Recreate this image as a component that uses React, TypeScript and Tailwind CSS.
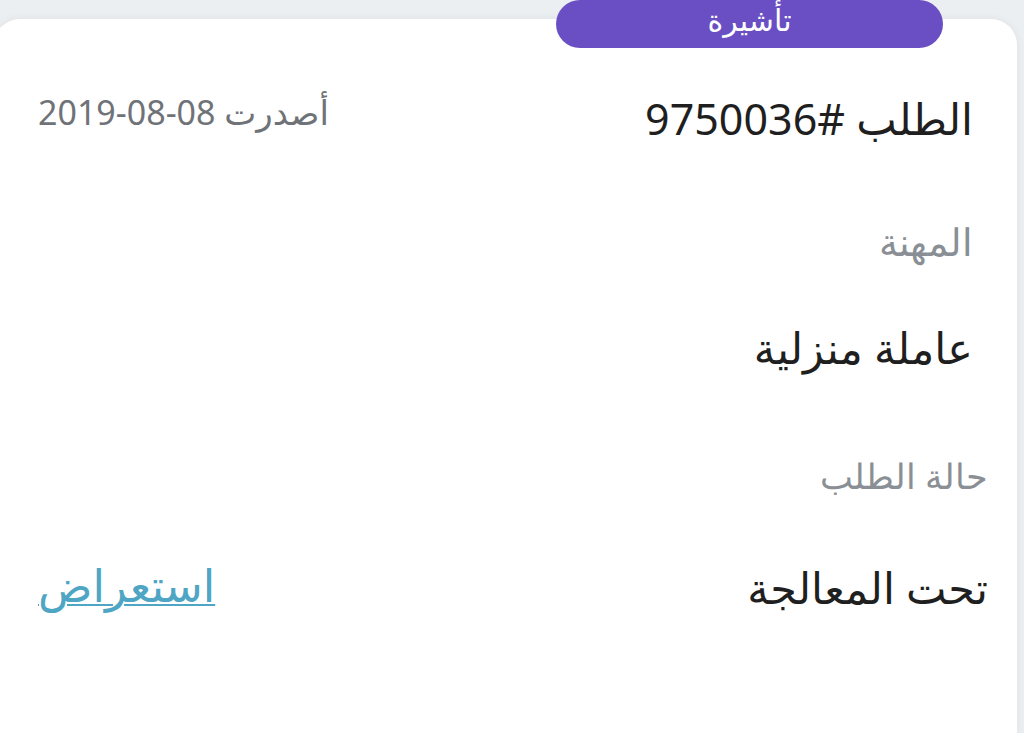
import React from 'react';

export default function App() {
  const font = { fontFamily: '"Noto Sans", "DejaVu Sans", sans-serif' };
  return (
    <div dir="rtl" className="h-[733px] w-[1024px] overflow-hidden bg-[#eceff2]" style={font}>
      <div className="relative mr-[7px] ml-[-6px] mt-[19px] h-[760px] rounded-t-[26px] bg-white shadow-[0_0_10px_rgba(0,0,0,0.06)]">
        {/* badge */}
        <div className="absolute right-[74px] top-[-19px] flex h-[48px] w-[387px] items-center justify-center rounded-full bg-[#6a4fc4] pb-[9px] text-[30px] leading-[40px] text-white">
          تأشيرة
        </div>

        <div className="pr-[44px] pl-[44px] pt-[72px]">
          <div className="flex items-start justify-between">
            <h1 className="text-[43px] leading-[56px] text-[#1f1f1f]">
              الطلب <span dir="ltr" className="inline-block">9750036#</span>
            </h1>
            <p className="mt-[-3px] text-[34px] leading-[48px] text-[#6f7378]">
              أصدرت <span dir="ltr" className="inline-block">2019-08-08</span>
            </p>
          </div>

          <p className="mt-[70px] text-[38px] leading-[48px] font-light text-[#8a8f95]">المهنة</p>
          <p className="mt-[53px] text-[43px] leading-[60px] text-[#1f1f1f]">عاملة منزلية</p>
        </div>

        <div className="pr-[29px] pl-[44px]">
          <p className="mt-[74px] text-[35px] leading-[48px] font-light text-[#8a8f95]">حالة الطلب</p>
          <div className="mt-[58px] flex items-center justify-between">
            <p className="text-[43px] leading-[60px] text-[#1f1f1f]">تحت المعالجة</p>
            <a href="#" className="mt-[-6px] text-[45px] leading-[60px] text-[#4ea6c4] underline decoration-2 underline-offset-[2px]">
              استعراض
            </a>
          </div>
        </div>
      </div>
    </div>
  );
}
